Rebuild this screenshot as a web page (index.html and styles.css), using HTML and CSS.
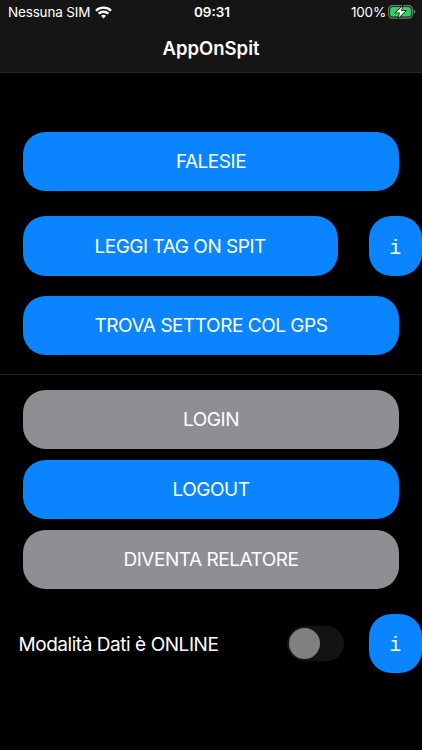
FILE: index.html
```html
<!DOCTYPE html>
<html lang="it">
<head>
<meta charset="UTF-8" />
<meta name="viewport" content="width=device-width, initial-scale=1" />
<title>AppOnSpit</title>
<link rel="stylesheet" href="styles.css">
</head>
<body>

<header>
<div class="status-bar">
<div class="carrier">
<span class="carrier-name">Nessuna SIM</span>
<svg class="wifi" width="17" height="13" viewBox="0 0 17 13" fill="none" stroke="#fff" stroke-width="2.3">
<path d="M1 4.7C5.1.7 11.9.7 16 4.7" />
<path d="M3.6 7.7C6.3 5.1 10.7 5.1 13.4 7.7" />
<path d="M6 9.8Q8.5 7.7 11 9.8L8.5 12.4Z" fill="#fff" stroke="none" />
</svg>
</div>
<span class="time">09:31</span>
<div class="battery">
<span class="percent">100%</span>
<svg width="28" height="14" viewBox="0 0 28 14">
<rect x=".6" y=".6" width="23.8" height="12.5" rx="3.6" fill="none" stroke="#7b7b7d" stroke-width="1.1" />
<rect x="2.1" y="2.1" width="20.8" height="9.5" rx="2.2" fill="#30d158" />
<path d="M25.7 4.6q1.6.6 1.6 2.2t-1.6 2.2z" fill="#7b7b7d" />
<path d="M14.2 1.4L7.9 7.5H12L10.7 12.4L17.2 6.1H13Z" fill="#fff" stroke="#161617" stroke-width="1.5" paint-order="stroke" />
</svg>
</div>
</div>
<h1>AppOnSpit</h1>
</header>

<main>
<section class="climb">
<button class="btn">FALESIE</button>
<div class="row row-tag">
<button class="btn">LEGGI TAG ON SPIT</button>
<button class="btn info">i</button>
</div>
<button class="btn">TROVA SETTORE COL GPS</button>
</section>

<section class="account">
<button class="btn disabled">LOGIN</button>
<button class="btn">LOGOUT</button>
<button class="btn disabled">DIVENTA RELATORE</button>
</section>

<div class="row row-mode">
<span class="mode-label">Modalità Dati è ONLINE</span>
<button class="switch" role="switch" aria-checked="false" aria-label="Modalità Dati"><span class="knob"></span></button>
<button class="btn info">i</button>
</div>
</main>

</body>
</html>
```
FILE: styles.css
```css
* {
box-sizing: border-box;
}
body {
margin: 0;
min-height: 750px;
background: #000;
color: #fff;
font-family: Inter, "Liberation Sans", sans-serif;
overflow: hidden;
}
header {
height: 73px;
background: #151516;
border-bottom: 1px solid #242425;
}
.status-bar {
display: grid;
grid-template-columns: 1fr auto 1fr;
height: 24px;
padding: 0 6px 0 8px;
align-items: center;
font-size: 13.5px;
}
.carrier, .battery {
display: flex;
align-items: center;
}
.carrier {
gap: 5px;
letter-spacing: -0.17px;
}
.battery {
justify-content: flex-end;
gap: 2px;
letter-spacing: -0.2px;
}
.time {
font-weight: 600;
}
h1 {
margin: 0;
font-size: 18.5px;
line-height: 48px;
font-weight: 600;
text-align: center;
}
button {
border: none;
padding: 0;
font-family: inherit;
color: #fff;
}
.btn {
display: block;
width: 100%;
height: 59.2px;
border-radius: 22.5px;
background: #0a84ff;
font-size: 19px;
letter-spacing: -0.47px;
}
.disabled {
background: #8e8e93;
}
.row {
display: flex;
align-items: center;
}
.climb {
height: 301.5px;
padding: 59.3px 22.7px 0;
border-bottom: 1px solid #242426;
}
.row-tag {
margin: 25px -22.7px 20px 0;
justify-content: space-between;
}
.row-tag .btn:first-child {
width: 315px;
}
.row .info {
width: 53.3px;
padding-top: 4px;
font-family: "Liberation Mono", monospace;
font-size: 20px;
letter-spacing: 0;
}
.account {
display: flex;
flex-direction: column;
gap: 11px;
padding: 15.2px 22.7px 0;
}
.row-mode {
margin-top: 25px;
padding-left: 18.5px;
}
.mode-label {
width: 268px;
padding-top: 1px;
font-size: 19px;
letter-spacing: -0.45px;
white-space: nowrap;
}
.switch {
width: 57.5px;
height: 35px;
margin-right: auto;
padding: 2px;
border-radius: 18px;
background: #131314;
}
.knob {
display: block;
width: 31px;
height: 31px;
border-radius: 50%;
background: #808080;
}
```
